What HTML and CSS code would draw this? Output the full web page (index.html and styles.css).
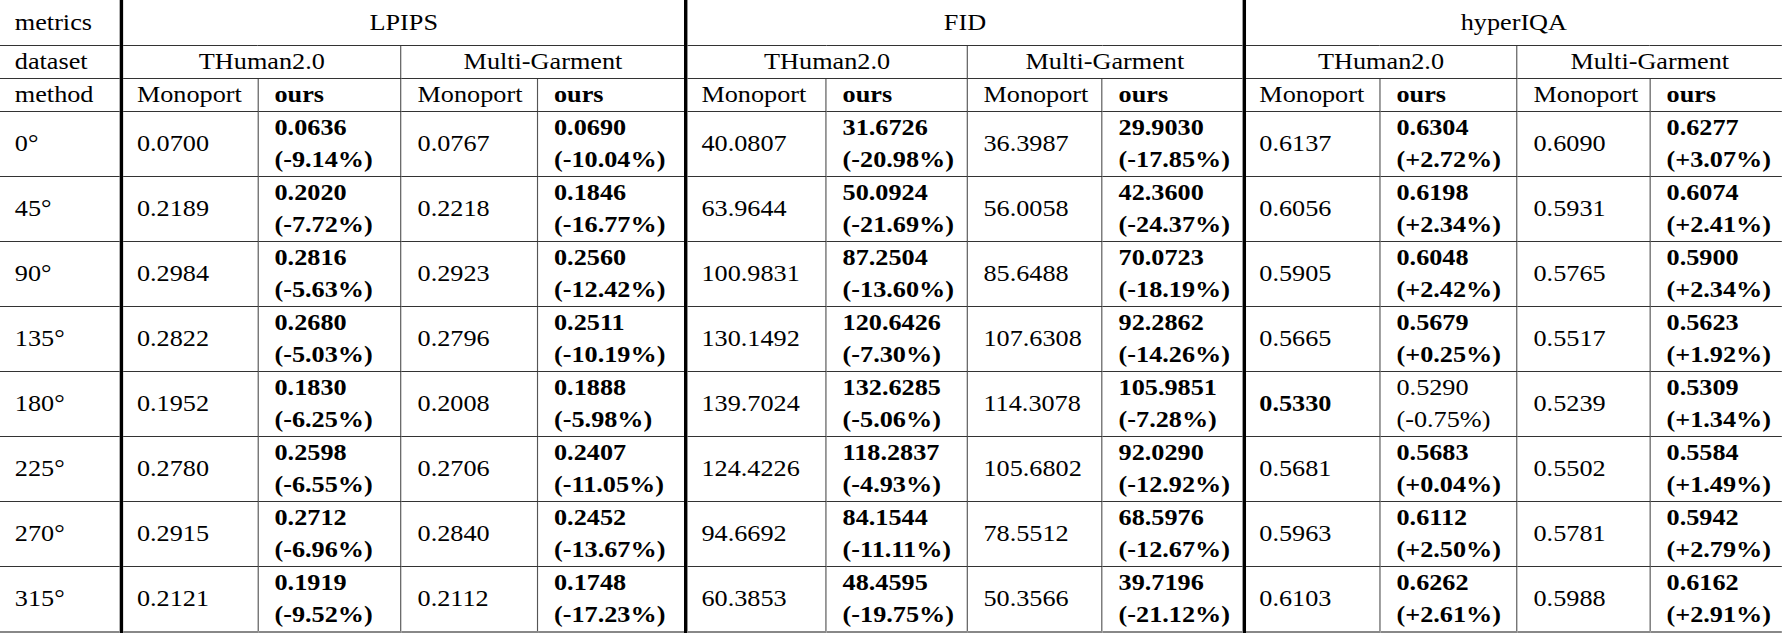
FILE: index.html
```html
<!DOCTYPE html>
<html>
<head>
<meta charset="utf-8">
<link rel="stylesheet" href="styles.css">
</head>
<body>
<div class="wrap">
<table class="res">
<colgroup>
<col class="w0"><col class="w1"><col class="w2"><col class="w3"><col class="w4"><col class="w5"><col class="w6"><col class="w7"><col class="w8"><col class="w9"><col class="w10"><col class="w11"><col class="w12">
</colgroup>
<tr class="h1">
<td class="lab">metrics</td>
<td class="k c" colspan="4">LPIPS</td>
<td class="k c" colspan="4">FID</td>
<td class="k c" colspan="4">hyperIQA</td>
</tr>
<tr class="h2">
<td class="lab">dataset</td>
<td class="k c" colspan="2">THuman2.0</td><td class="c" colspan="2">Multi-Garment</td>
<td class="k c" colspan="2">THuman2.0</td><td class="c" colspan="2">Multi-Garment</td>
<td class="k c" colspan="2">THuman2.0</td><td class="c" colspan="2">Multi-Garment</td>
</tr>
<tr class="h2">
<td class="lab">method</td>
<td class="k">Monoport</td><td class="b">ours</td><td>Monoport</td><td class="b">ours</td>
<td class="k">Monoport</td><td class="b">ours</td><td>Monoport</td><td class="b">ours</td>
<td class="k">Monoport</td><td class="b">ours</td><td>Monoport</td><td class="b">ours</td>
</tr>
<tr class="d">
<td class="lab">0°</td>
<td class="k">0.0700</td><td class="b">0.0636<br>(-9.14%)</td><td>0.0767</td><td class="b">0.0690<br>(-10.04%)</td>
<td class="k">40.0807</td><td class="b">31.6726<br>(-20.98%)</td><td>36.3987</td><td class="b">29.9030<br>(-17.85%)</td>
<td class="k">0.6137</td><td class="b">0.6304<br>(+2.72%)</td><td>0.6090</td><td class="b">0.6277<br>(+3.07%)</td>
</tr>
<tr class="d">
<td class="lab">45°</td>
<td class="k">0.2189</td><td class="b">0.2020<br>(-7.72%)</td><td>0.2218</td><td class="b">0.1846<br>(-16.77%)</td>
<td class="k">63.9644</td><td class="b">50.0924<br>(-21.69%)</td><td>56.0058</td><td class="b">42.3600<br>(-24.37%)</td>
<td class="k">0.6056</td><td class="b">0.6198<br>(+2.34%)</td><td>0.5931</td><td class="b">0.6074<br>(+2.41%)</td>
</tr>
<tr class="d">
<td class="lab">90°</td>
<td class="k">0.2984</td><td class="b">0.2816<br>(-5.63%)</td><td>0.2923</td><td class="b">0.2560<br>(-12.42%)</td>
<td class="k">100.9831</td><td class="b">87.2504<br>(-13.60%)</td><td>85.6488</td><td class="b">70.0723<br>(-18.19%)</td>
<td class="k">0.5905</td><td class="b">0.6048<br>(+2.42%)</td><td>0.5765</td><td class="b">0.5900<br>(+2.34%)</td>
</tr>
<tr class="d">
<td class="lab">135°</td>
<td class="k">0.2822</td><td class="b">0.2680<br>(-5.03%)</td><td>0.2796</td><td class="b">0.2511<br>(-10.19%)</td>
<td class="k">130.1492</td><td class="b">120.6426<br>(-7.30%)</td><td>107.6308</td><td class="b">92.2862<br>(-14.26%)</td>
<td class="k">0.5665</td><td class="b">0.5679<br>(+0.25%)</td><td>0.5517</td><td class="b">0.5623<br>(+1.92%)</td>
</tr>
<tr class="d">
<td class="lab">180°</td>
<td class="k">0.1952</td><td class="b">0.1830<br>(-6.25%)</td><td>0.2008</td><td class="b">0.1888<br>(-5.98%)</td>
<td class="k">139.7024</td><td class="b">132.6285<br>(-5.06%)</td><td>114.3078</td><td class="b">105.9851<br>(-7.28%)</td>
<td class="k b">0.5330</td><td>0.5290<br>(-0.75%)</td><td>0.5239</td><td class="b">0.5309<br>(+1.34%)</td>
</tr>
<tr class="d">
<td class="lab">225°</td>
<td class="k">0.2780</td><td class="b">0.2598<br>(-6.55%)</td><td>0.2706</td><td class="b">0.2407<br>(-11.05%)</td>
<td class="k">124.4226</td><td class="b">118.2837<br>(-4.93%)</td><td>105.6802</td><td class="b">92.0290<br>(-12.92%)</td>
<td class="k">0.5681</td><td class="b">0.5683<br>(+0.04%)</td><td>0.5502</td><td class="b">0.5584<br>(+1.49%)</td>
</tr>
<tr class="d">
<td class="lab">270°</td>
<td class="k">0.2915</td><td class="b">0.2712<br>(-6.96%)</td><td>0.2840</td><td class="b">0.2452<br>(-13.67%)</td>
<td class="k">94.6692</td><td class="b">84.1544<br>(-11.11%)</td><td>78.5512</td><td class="b">68.5976<br>(-12.67%)</td>
<td class="k">0.5963</td><td class="b">0.6112<br>(+2.50%)</td><td>0.5781</td><td class="b">0.5942<br>(+2.79%)</td>
</tr>
<tr class="d last">
<td class="lab">315°</td>
<td class="k">0.2121</td><td class="b">0.1919<br>(-9.52%)</td><td>0.2112</td><td class="b">0.1748<br>(-17.23%)</td>
<td class="k">60.3853</td><td class="b">48.4595<br>(-19.75%)</td><td>50.3566</td><td class="b">39.7196<br>(-21.12%)</td>
<td class="k">0.6103</td><td class="b">0.6262<br>(+2.61%)</td><td>0.5988</td><td class="b">0.6162<br>(+2.91%)</td>
</tr>
</table>
</div>
</body>
</html>
```

FILE: styles.css
```css
html, body {
  margin: 0;
  padding: 0;
  background: #fff;
}
.wrap {
  width: 1782px;
  height: 638px;
  overflow: hidden;
}
.res {
  width: 1563px;
  table-layout: fixed;
  border-collapse: collapse;
  font-family: "Liberation Serif", "Times New Roman", serif;
  font-size: 23px;
  line-height: 32px;
  color: #000;
  transform: scaleX(1.14);
  transform-origin: 0 0;
}
.w0 { width: 106.6px; }
.w1 { width: 119.7px; }
.w2 { width: 125.5px; }
.w3 { width: 119.7px; }
.w4 { width: 130.3px; }
.w5 { width: 122.8px; }
.w6 { width: 123.6px; }
.w7 { width: 118.5px; }
.w8 { width: 124.5px; }
.w9 { width: 119.3px; }
.w10 { width: 120.2px; }
.w11 { width: 116.7px; }
.w12 { width: 115.8px; }
.res td {
  padding: 0 0 0 14px;
  text-align: left;
  vertical-align: middle;
  white-space: nowrap;
  border-left: 1px solid #555;
  border-bottom: 1px solid #333;
  overflow: hidden;
}
.res td.lab {
  border-left: none;
  padding-left: 13px;
}
.res td.k {
  border-left: 3px solid #000;
  padding-left: 12px;
}
.res td.c {
  text-align: center;
  padding-left: 0;
}
.res td.b {
  font-weight: bold;
}
.h1 td { height: 45px; }
.h2 td { height: 32px; }
.d td { height: 63.5px; }
.last td { border-bottom: 2px solid #888; }
```
